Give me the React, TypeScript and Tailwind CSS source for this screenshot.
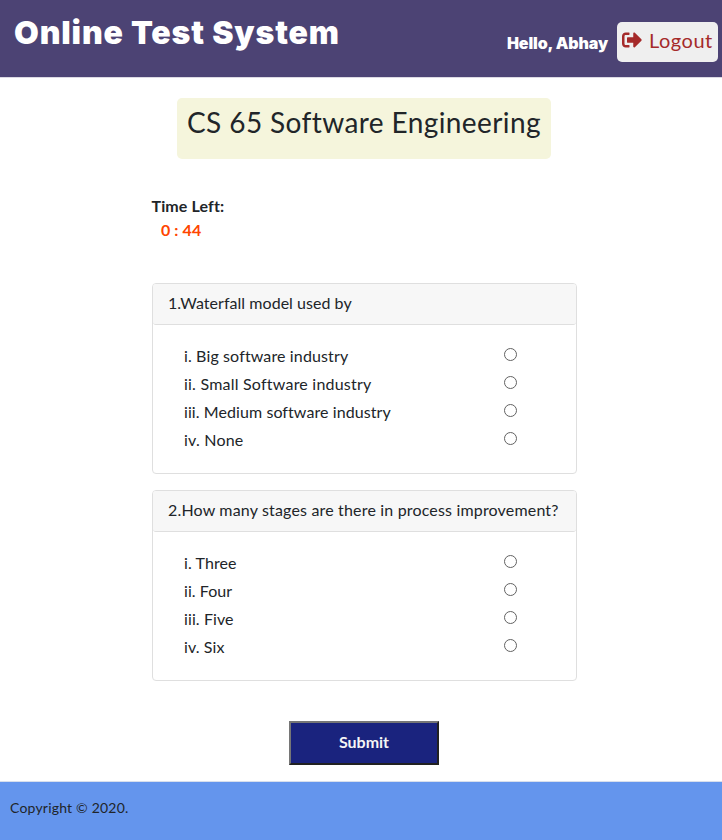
import { FaSignOutAlt } from "react-icons/fa";

type Question = { title: string; titleSpacing: string; options: { label: string; spacing: string }[] };

const questions: Question[] = [
  {
    title: "1.Waterfall model used by",
    titleSpacing: "tracking-[0.04px]",
    options: [
      { label: "i. Big software industry", spacing: "tracking-[0.13px]" },
      { label: "ii. Small Software industry", spacing: "tracking-[0.22px]" },
      { label: "iii. Medium software industry", spacing: "tracking-[0.08px]" },
      { label: "iv. None", spacing: "tracking-[0.2px]" },
    ],
  },
  {
    title: "2.How many stages are there in process improvement?",
    titleSpacing: "tracking-[0.17px]",
    options: [
      { label: "i. Three", spacing: "tracking-[0.1px]" },
      { label: "ii. Four", spacing: "tracking-[0.05px]" },
      { label: "iii. Five", spacing: "tracking-[0.1px]" },
      { label: "iv. Six", spacing: "tracking-[0.1px]" },
    ],
  },
];

function QuestionCard({ question, index }: { question: Question; index: number }) {
  return (
    <section className="h-[191px] w-[425px] rounded border border-[#dfdfdf] bg-white">
      <h2 className={`h-[41px] whitespace-nowrap rounded-[3px] border-b border-[#dfdfdf] bg-[#f7f7f7] pl-[15.5px] pt-[7px] text-[16px] leading-6 ${question.titleSpacing}`}>
        {question.title}
      </h2>
      <div className="pl-[31.5px] pr-[59px] pt-[19px]">
        {question.options.map((o) => (
          <label key={o.label} className="flex h-7 items-start justify-between whitespace-nowrap text-[16px] leading-6">
            <span className={o.spacing}>{o.label}</span>
            <input type="radio" name={`q${index}`} className="mt-[4px] h-[13px] w-[13px] appearance-none rounded-full border border-[#626262] bg-white checked:border-4" />
          </label>
        ))}
      </div>
    </section>
  );
}

export default function App() {
  return (
    <div className="flex h-[840px] w-[722px] flex-col overflow-hidden bg-white font-['Lato',sans-serif] text-[#212529]">
      <header className="flex h-[78px] shrink-0 items-start justify-between border-b border-[#dbd9e3] bg-[#4c4374] pl-[14px] pr-1 text-white">
        <h1 className="mt-[13px] whitespace-nowrap font-['Inter',sans-serif] text-[32px] font-black leading-10 tracking-[0.85px]">
          Online Test System
        </h1>
        <div className="flex items-start">
          <span className="mr-[9px] mt-[31px] whitespace-nowrap font-['Inter',sans-serif] text-[16px] font-black leading-6 tracking-[-0.1px]">
            Hello, Abhay
          </span>
          <button className="mt-[22px] flex h-10 w-[101px] items-start rounded-[5px] bg-[#efefef] pl-[5px] text-[#a52a2a]">
            <FaSignOutAlt className="mt-[8px] h-5 w-5 shrink-0" />
            <span className="ml-[7px] mt-[3px] whitespace-nowrap text-[20px] leading-[30px] tracking-[0.5px]">Logout</span>
          </button>
        </div>
      </header>

      <main className="flex h-[703px] shrink-0 flex-col items-center pl-[6px]">
        <div className="mt-5 h-[61px] w-[374px] rounded-[5px] bg-[#f5f5dc] pl-[10px] pt-[6px]">
          <h2 className="whitespace-nowrap text-[28px] leading-9 tracking-[0.4px]">CS 65 Software Engineering</h2>
        </div>
        <div className="mt-[35px] h-[89px] w-[425px] text-[16px] font-bold leading-6">
          <div className="whitespace-nowrap tracking-[0.12px]">Time Left:</div>
          <div className="whitespace-nowrap pl-[9.5px] tracking-[0.1px] text-[#ff4500]">0 : 44</div>
        </div>
        <div className="flex flex-col gap-4">
          {questions.map((q, i) => (
            <QuestionCard key={q.title} question={q} index={i} />
          ))}
        </div>
        <button className="mt-10 flex h-11 w-[150px] items-start justify-center border-2 border-b-[#212121] border-l-[#767676] border-r-[#212121] border-t-[#767676] bg-[#1a237e] pt-[7px] text-[16px] font-bold leading-6 text-[#f5f5f5]">
          Submit
        </button>
      </main>

      <footer className="h-[59px] shrink-0 border-t border-[#d8dfec] bg-[#6495ed] pl-[10px] pt-[15px] text-[14px] leading-[21px] tracking-[0.2px]">
        Copyright © 2020.
      </footer>
    </div>
  );
}
